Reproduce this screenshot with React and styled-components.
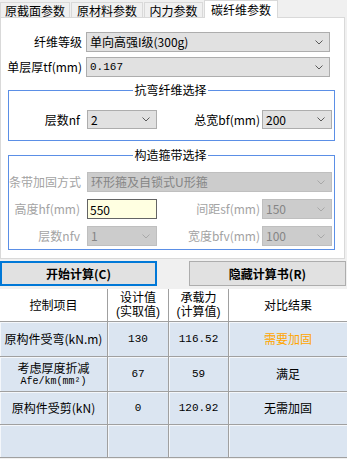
import React from 'react';
import styled, { createGlobalStyle } from 'styled-components';

const Global = createGlobalStyle`
  html, body { margin: 0; padding: 0; background: #f0f0f0; }
  body {
    font-family: "Noto Sans CJK SC", "Liberation Sans", sans-serif;
    font-size: 12px;
    color: #000;
    overflow: hidden;
  }
`;

const Root = styled.div`
  width: 347px;
  height: 459px;
  display: flex;
  flex-direction: column;
  background: #f0f0f0;
  overflow: hidden;
`;

const TabBar = styled.div`
  display: flex;
  align-items: flex-end;
  height: 18px;
  position: relative;
  z-index: 2;
`;

const Tab = styled.div`
  box-sizing: border-box;
  width: ${p => p.$w}px;
  height: ${p => (p.$active ? 18 : 16)}px;
  margin-right: 1px;
  background: ${p => (p.$active ? '#fff' : '#f0f0f0')};
  border: 1px solid #d9d9d9;
  border-bottom: ${p => (p.$active ? 'none' : '1px solid #d9d9d9')};
  display: flex;
  align-items: center;
  justify-content: center;
  line-height: 14px;
  white-space: nowrap;
  padding-top: ${p => (p.$active ? 0 : 1)}px;
`;

const Panel = styled.div`
  width: 345px;
  box-sizing: border-box;
  margin-top: -1px;
  background: #fff;
  border: 1px solid #d9d9d9;
  padding: 14px 0 8px 0;
  position: relative;
  z-index: 1;
`;

const FormRow = styled.div`
  display: grid;
  grid-template-columns: 85px 1fr;
  height: 20px;
  padding-right: 14px;
  margin-top: ${p => p.$mt || 0}px;
`;

const Label = styled.div`
  display: flex;
  align-items: center;
  justify-content: flex-end;
  white-space: nowrap;
  padding-right: ${p => (p.$pr !== undefined ? p.$pr : 4)}px;
  color: ${p => (p.$disabled ? '#a3a3a3' : '#000')};
  line-height: 14px;
`;

const Field = styled.div`
  box-sizing: border-box;
  height: 100%;
  display: flex;
  align-items: center;
  justify-content: space-between;
  padding: 0 6px 0 3px;
  background: ${p => (p.$disabled ? '#cccccc' : '#e1e1e1')};
  border: 1px solid ${p => (p.$disabled ? '#bfbfbf' : '#adadad')};
  color: ${p => (p.$disabled ? '#858585' : '#000')};
  white-space: nowrap;
  overflow: hidden;
  line-height: 14px;
  grid-column: ${p => p.$span || 'auto'};
`;

const Chevron = styled.svg`
  flex: none;
  width: 8px;
  height: 5px;
`;

const TextInput = styled.input`
  box-sizing: border-box;
  width: 100%;
  height: 100%;
  margin: 0;
  padding: 0 2px;
  background: #ffffe1;
  border: 1px solid #646464;
  font: inherit;
  color: #000;
  outline: none;
`;

const Group = styled.fieldset`
  margin: ${p => p.$mt}px 9px 0 7px;
  padding: ${p => p.$pt}px 2px ${p => p.$pb}px 0;
  border: 1px solid #5b8fe6;
  min-width: 0;
  & > legend {
    margin: 0 auto;
    padding: 0 1px;
    line-height: 14px;
    font-size: 12px;
  }
`;

const GroupGrid = styled.div`
  display: grid;
  grid-template-columns: 78px 70px 1fr 70px;
  grid-auto-rows: ${p => p.$rh}px;
  row-gap: 7px;
`;

const ButtonRow = styled.div`
  display: flex;
  justify-content: space-between;
  margin-top: 2px;
  padding-right: 1px;
`;

const Button = styled.div`
  box-sizing: border-box;
  width: 157px;
  height: 25px;
  display: flex;
  align-items: center;
  justify-content: center;
  background: #e1e1e1;
  border: ${p => (p.$focused ? '2px solid #0078d7' : '1px solid #adadad')};
  font-weight: bold;
  font-size: 12px;
  line-height: 14px;
`;

const Table = styled.div`
  display: grid;
  grid-template-columns: 108px 61px 60px 1fr;
  grid-template-rows: 33px 35px 35px 33px 33px;
  margin-top: 3px;
  background: #fff;
`;

const Cell = styled.div`
  box-sizing: border-box;
  display: flex;
  flex-direction: column;
  align-items: center;
  justify-content: center;
  text-align: center;
  background: ${p => (p.$head ? '#fff' : '#dbe5f1')};
  border-right: 1px solid #a0a0a0;
  border-bottom: 1px solid #a0a0a0;
  box-shadow: ${p => (p.$head ? 'none' : 'inset 1px 1px 0 #f4f7fb')};
  color: ${p => p.$color || '#000'};
  line-height: 14px;
  white-space: nowrap;
  &:nth-child(4n) { border-right: none; }
`;

const Line = styled.span`
  display: block;
  height: ${p => p.$h}px;
  line-height: ${p => p.$h}px;
  font-family: "Liberation Sans", "Noto Sans CJK SC", sans-serif;
  font-size: 12px;
`;

const SubText = styled.span`
  display: block;
  font-family: "Liberation Mono", "DejaVu Sans Mono", monospace;
  font-size: 10px;
  height: 11px;
  line-height: 11px;
`;

const Mono = styled.span`
  font-family: "Liberation Mono", "DejaVu Sans Mono", monospace;
  font-size: 11px;
`;

const Arrow = ({ disabled }) => (
  <Chevron viewBox="0 0 8 5">
    <polyline
      points="0.5,0.5 4,4 7.5,0.5"
      fill="none"
      stroke={disabled ? '#a8a8a8' : '#5a5a5a'}
      strokeWidth="1"
    />
  </Chevron>
);

const Select = ({ value, disabled, span, mono }) => (
  <Field $disabled={disabled} $span={span}>
    {mono ? <Mono>{value}</Mono> : <span>{value}</span>}
    <Arrow disabled={disabled} />
  </Field>
);

export default function App() {
  const rows = [
    { name: '原构件受弯(kN.m)', design: '130', cap: '116.52', res: '需要加固', color: '#ffa500' },
    { name: 'afe', design: '67', cap: '59', res: '满足' },
    { name: '原构件受剪(kN)', design: '0', cap: '120.92', res: '无需加固' },
    { name: '', design: '', cap: '', res: '' },
  ];
  return (
    <Root>
      <Global />
      <TabBar>
        <Tab $w={70}>原截面参数</Tab>
        <Tab $w={72}>原材料参数</Tab>
        <Tab $w={59}>内力参数</Tab>
        <Tab $w={74} $active>碳纤维参数</Tab>
      </TabBar>
      <Panel>
        <FormRow>
          <Label>纤维等级</Label>
          <Select value="单向高强I级(300g)" />
        </FormRow>
        <FormRow $mt={5}>
          <Label>单层厚tf(mm)</Label>
          <Select value="0.167" mono />
        </FormRow>
        <Group $mt={6} $pt={13} $pb={11}>
          <legend>抗弯纤维选择</legend>
          <GroupGrid $rh={19}>
            <Label $pr={7}>层数nf</Label>
            <Select value="2" />
            <Label $pr={2}>总宽bf(mm)</Label>
            <Select value="200" />
          </GroupGrid>
        </Group>
        <Group $mt={7} $pt={10} $pb={3}>
          <legend>构造箍带选择</legend>
          <GroupGrid $rh={20}>
            <Label $pr={6} $disabled>条带加固方式</Label>
            <Select value="环形箍及自锁式U形箍" disabled span="2 / -1" />
            <Label $pr={7} $disabled>高度hf(mm)</Label>
            <TextInput defaultValue="550" />
            <Label $pr={2} $disabled>间距sf(mm)</Label>
            <Select value="150" disabled />
            <Label $pr={7} $disabled>层数nfv</Label>
            <Select value="1" disabled />
            <Label $pr={2} $disabled>宽度bfv(mm)</Label>
            <Select value="100" disabled />
          </GroupGrid>
        </Group>
      </Panel>
      <ButtonRow>
        <Button $focused>开始计算(C)</Button>
        <Button>隐藏计算书(R)</Button>
      </ButtonRow>
      <Table>
        <Cell $head>控制项目</Cell>
        <Cell $head><Line $h={14}>设计值</Line><Line $h={14}>(实取值)</Line></Cell>
        <Cell $head><Line $h={14}>承载力</Line><Line $h={14}>(计算值)</Line></Cell>
        <Cell $head>对比结果</Cell>
        {rows.map((r, i) => (
          <React.Fragment key={i}>
            <Cell>
              {r.name === 'afe' ? (
                <>
                  <Line $h={14}>考虑厚度折减</Line>
                  <SubText>Afe/km(mm²)</SubText>
                </>
              ) : r.name}
            </Cell>
            <Cell><Mono>{r.design}</Mono></Cell>
            <Cell><Mono>{r.cap}</Mono></Cell>
            <Cell $color={r.color}>{r.res}</Cell>
          </React.Fragment>
        ))}
      </Table>
    </Root>
  );
}
